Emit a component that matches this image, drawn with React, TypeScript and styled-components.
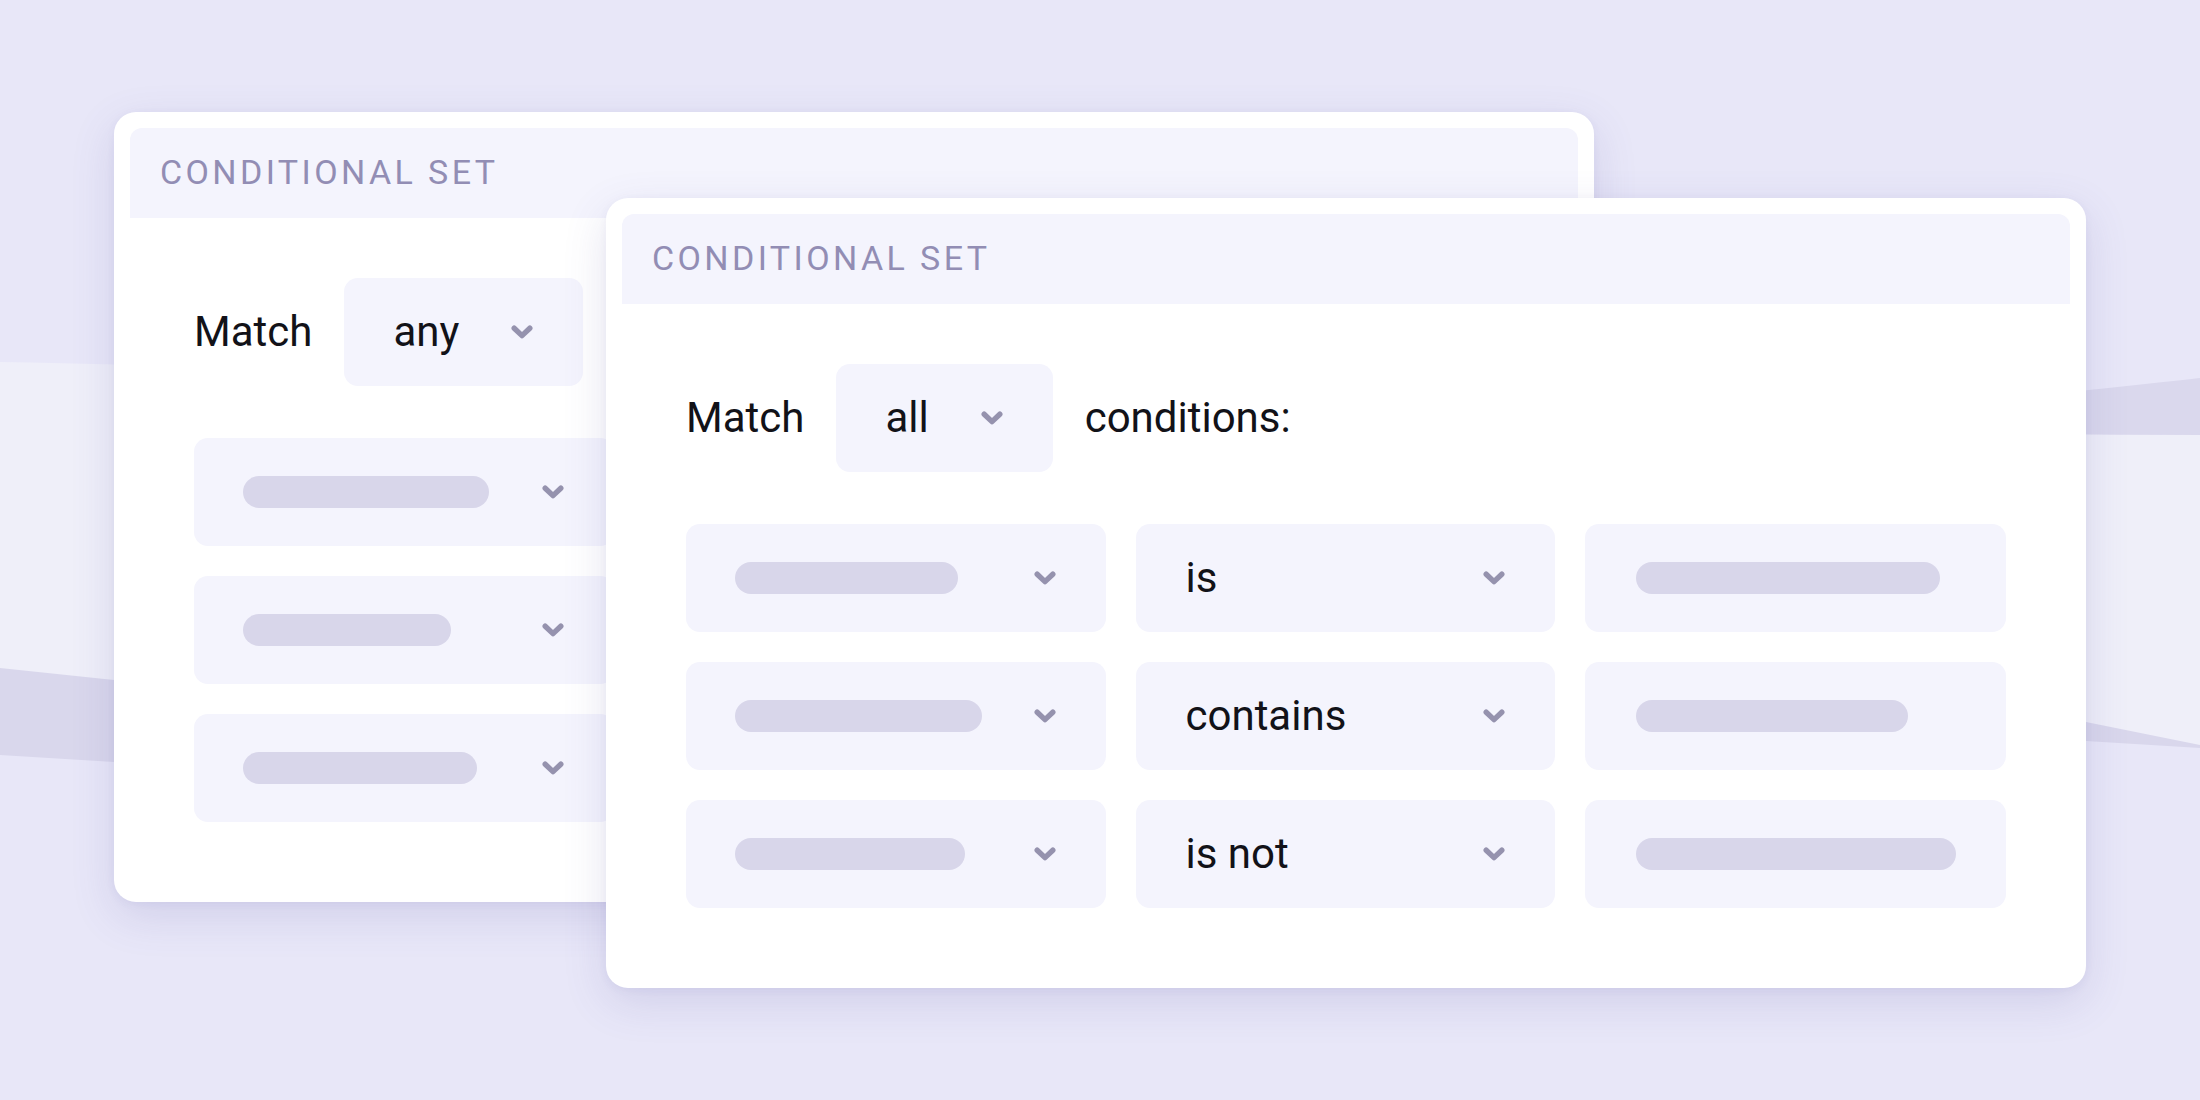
import React from 'react';
import styled, { createGlobalStyle } from 'styled-components';

// ==========================================================
// Data
// ==========================================================

type Condition = {
  fieldWidth: number;
  operator: string;
  valueWidth: number;
};

type ConditionSet = {
  id: string;
  x: number;
  y: number;
  mode: string;
  rows: Condition[];
};

const sets: ConditionSet[] = [
  {
    id: 'back',
    x: 114,
    y: 112,
    mode: 'any',
    rows: [
      { fieldWidth: 246, operator: 'is', valueWidth: 290 },
      { fieldWidth: 208, operator: 'contains', valueWidth: 260 },
      { fieldWidth: 234, operator: 'is not', valueWidth: 310 },
    ],
  },
  {
    id: 'front',
    x: 606,
    y: 198,
    mode: 'all',
    rows: [
      { fieldWidth: 223, operator: 'is', valueWidth: 304 },
      { fieldWidth: 247, operator: 'contains', valueWidth: 272 },
      { fieldWidth: 230, operator: 'is not', valueWidth: 320 },
    ],
  },
];

// ==========================================================
// Styled Components
// ==========================================================

const GlobalStyle = createGlobalStyle`
  html, body {
    margin: 0;
    padding: 0;
    background: #e8e7f8;
  }
  body {
    font-family: Roboto, "Liberation Sans", sans-serif;
    color: #121218;
  }
`;

const Stage = styled.main`
  position: relative;
  display: grid;
  width: 2200px;
  height: 1100px;
  overflow: hidden;
  background: #e8e7f8;
`;

const Waves = styled.svg`
  position: absolute;
  inset: 0;
  width: 2200px;
  height: 1100px;
  z-index: 0;
`;

const Card = styled.section<{ $x: number; $y: number }>`
  grid-area: 1 / 1;
  align-self: start;
  justify-self: start;
  position: relative;
  z-index: 1;
  margin: ${p => p.$y}px 0 0 ${p => p.$x}px;
  width: 1480px;
  padding-top: 16px;
  background: #ffffff;
  border-radius: 22px;
  box-shadow: 0 14px 44px rgba(88, 80, 160, 0.16),
              0 2px 8px rgba(88, 80, 160, 0.06);
`;

const CardHeader = styled.header`
  display: flex;
  align-items: center;
  height: 90px;
  margin: 0 16px;
  padding: 0 30px;
  background: #f4f4fd;
  border-radius: 12px 12px 0 0;
`;

const HeaderTitle = styled.h2`
  margin: 0 0 2px;
  font-family: Roboto, "Liberation Sans", sans-serif;
  font-size: 34px;
  font-weight: 400;
  letter-spacing: 3.4px;
  text-transform: uppercase;
  color: #928db4;
`;

const CardBody = styled.div`
  padding: 60px 80px 80px;
`;

const MatchRow = styled.div`
  display: flex;
  align-items: center;
  gap: 32px;
  height: 108px;
  margin-bottom: 52px;
`;

const Label = styled.span`
  font-size: 42px;
  line-height: 1;
  white-space: nowrap;
`;

const ModeSelect = styled.div`
  display: flex;
  align-items: center;
  gap: 52px;
  height: 108px;
  padding: 0 50px 0 49px;
  background: #f4f4fd;
  border-radius: 14px;
`;

const ConditionGrid = styled.div`
  display: grid;
  grid-template-columns: repeat(3, 1fr);
  gap: 30px;
`;

const Field = styled.div<{ $plain?: boolean }>`
  display: flex;
  align-items: center;
  justify-content: ${p => (p.$plain ? 'flex-start' : 'space-between')};
  height: 108px;
  padding: 0 50px 0 ${p => (p.$plain ? 51 : 49)}px;
  background: #f4f4fd;
  border-radius: 14px;
`;

const OperatorText = styled.span`
  font-size: 42px;
  line-height: 1;
  margin-left: 1px;
`;

const Pill = styled.span`
  display: block;
  height: 32px;
  border-radius: 16px;
  background: #d8d6ea;
`;

const ChevronIcon = styled.svg`
  flex: none;
  display: block;
  width: 22px;
  height: 14px;
`;

// ==========================================================
// Components
// ==========================================================

const Chevron: React.FC = () => (
  <ChevronIcon viewBox="0 0 22 14">
    <path
      d="M3.2 3.2 L11 10.6 L18.8 3.2"
      fill="none"
      stroke="#9592ae"
      strokeWidth={5.4}
      strokeLinecap="round"
      strokeLinejoin="round"
    />
  </ChevronIcon>
);

const Background: React.FC = () => (
  <Waves viewBox="0 0 2200 1100" preserveAspectRatio="none">
    {/* upper dark ribbon, only the right end shows */}
    <path d="M900 470 C1400 455 1900 412 2200 378 L2200 470 Z" fill="#dad8ed" />
    {/* lower dark ribbon */}
    <path
      d="M0 600 L2200 600 L2200 748 L2086 741 C1500 770 700 790 114 762 L0 755 Z"
      fill="#d9d7ec"
    />
    {/* light band */}
    <path
      d="M0 362 C600 372 1400 435 2200 435 L2200 745 L2086 722 C1500 650 700 740 114 680 L0 668 Z"
      fill="#efeff9"
    />
  </Waves>
);

const ConditionCard: React.FC<{ set: ConditionSet }> = ({ set }) => (
  <Card $x={set.x} $y={set.y}>
    <CardHeader>
      <HeaderTitle>Conditional set</HeaderTitle>
    </CardHeader>
    <CardBody>
      <MatchRow>
        <Label>Match</Label>
        <ModeSelect>
          <Label>{set.mode}</Label>
          <Chevron />
        </ModeSelect>
        <Label>conditions:</Label>
      </MatchRow>

      <ConditionGrid>
        {set.rows.map((row, i) => (
          <React.Fragment key={i}>
            <Field>
              <Pill style={{ width: row.fieldWidth }} />
              <Chevron />
            </Field>
            <Field>
              <OperatorText>{row.operator}</OperatorText>
              <Chevron />
            </Field>
            <Field $plain>
              <Pill style={{ width: row.valueWidth }} />
            </Field>
          </React.Fragment>
        ))}
      </ConditionGrid>
    </CardBody>
  </Card>
);

export default function App() {
  return (
    <>
      <GlobalStyle />
      <Stage>
        <Background />
        {sets.map(set => (
          <ConditionCard key={set.id} set={set} />
        ))}
      </Stage>
    </>
  );
}
